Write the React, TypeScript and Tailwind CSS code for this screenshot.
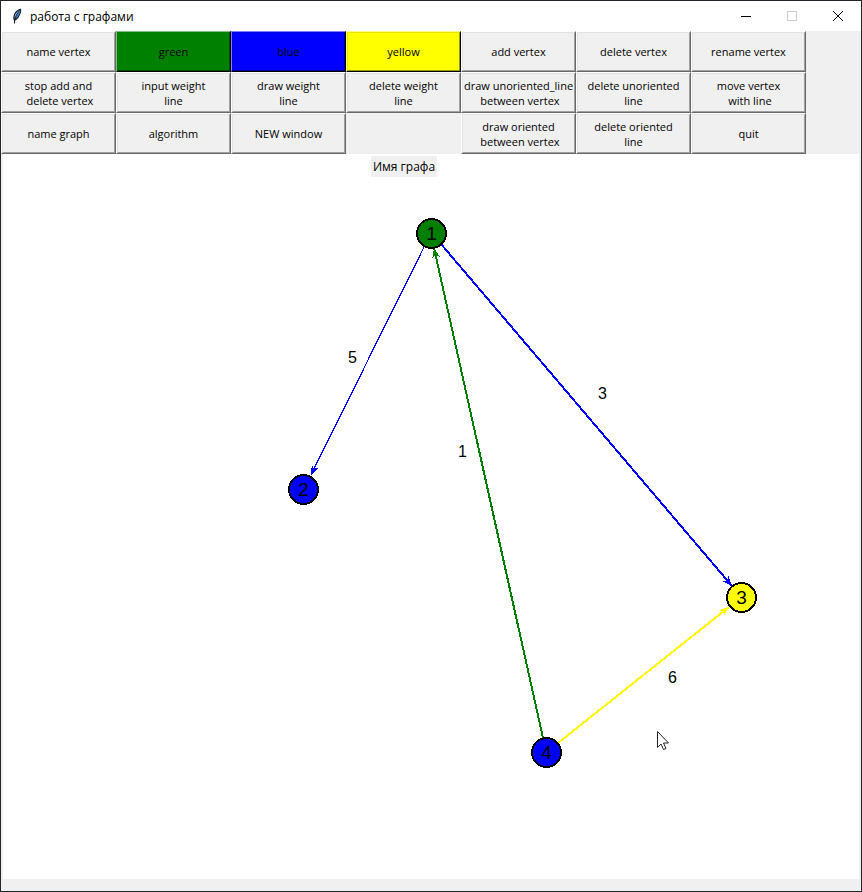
import type { ReactNode } from "react";

type ToolButton = { label: string; tone?: "green" | "blue" | "yellow" };

const tools: (ToolButton | null)[] = [
  { label: "name vertex" },
  { label: "green", tone: "green" },
  { label: "blue", tone: "blue" },
  { label: "yellow", tone: "yellow" },
  { label: "add vertex" },
  { label: "delete vertex" },
  { label: "rename vertex" },
  { label: "stop add and\n delete vertex" },
  { label: "input weight\nline" },
  { label: "draw weight\nline" },
  { label: "delete weight\nline" },
  { label: "draw unoriented_line\n between vertex" },
  { label: "delete unoriented\nline" },
  { label: "move vertex\n with line" },
  { label: "name graph" },
  { label: "algorithm" },
  { label: "NEW window" },
  null,
  { label: "draw oriented\n between vertex" },
  { label: "delete oriented\nline" },
  { label: "quit" },
];

const outer = {
  plain: "border-t-white border-l-white border-r-[#696969] border-b-[#696969]",
  green: "border-t-[#7fbf7f] border-l-[#7fbf7f] border-r-black border-b-black",
  blue: "border-t-[#7f7fff] border-l-[#7f7fff] border-r-black border-b-black",
  yellow: "border-t-[#ffff7f] border-l-[#ffff7f] border-r-black border-b-black",
};

const inner = {
  plain: "bg-[#f0f0f0] border-t-[#e3e3e3] border-l-[#e3e3e3] border-r-[#a0a0a0] border-b-[#a0a0a0]",
  green: "bg-[#008000] border-t-[#008000] border-l-[#008000] border-r-[#004d00] border-b-[#004d00]",
  blue: "bg-[#0000ff] border-t-[#0000e6] border-l-[#0000e6] border-r-[#000099] border-b-[#000099]",
  yellow: "bg-[#ffff00] border-t-[#e6e600] border-l-[#e6e600] border-r-[#999900] border-b-[#999900]",
};

function Tool({ label, tone }: ToolButton) {
  const key = tone ?? "plain";
  return (
    <button type="button" className={`flex h-[41px] border ${outer[key]}`}>
      <span className={`flex h-full w-full items-center justify-center border whitespace-pre text-center ${inner[key]}`}>
        {label}
      </span>
    </button>
  );
}

function WindowButton({ name, children }: { name: string; children: ReactNode }) {
  return (
    <button type="button" aria-label={name} className="flex h-full w-[46px] items-center justify-center">
      <svg width="12" height="12" viewBox="0 0 12 12" fill="none" shapeRendering="crispEdges">
        {children}
      </svg>
    </button>
  );
}

function Feather() {
  return (
    <svg width="16" height="16" viewBox="0 0 16 16" aria-hidden="true">
      <path d="M5 15.500 5 12.500C3.500 10 4.500 6 7 3.200 8.800 1.200 11.500.2 12 .8c.8 1.200-.2 5.700-2.200 8.400C8.500 11 7 12.300 6.200 12.500L6 15.500z" fill="#18222e" />
      <path d="M5.600 10.500C5 8 6.500 5 10.500 1.800 7.500 5.500 6.500 8 5.600 10.500z" fill="#9cc3ec" />
      <path d="M6.500 11C7 8 8.500 5 11.400 1.800 11.200 5.500 9.500 9 6.500 11z" fill="#3f76b8" />
    </svg>
  );
}

const edges = [
  { x1: 424, y1: 247, x2: 311, y2: 475, color: "#0000ff", width: 1.3, weight: "5", tx: 352.5, ty: 357 },
  { x1: 441, y1: 244, x2: 732, y2: 586, color: "#0000ff", width: 2, weight: "3", tx: 602.5, ty: 393 },
  { x1: 543, y1: 738, x2: 434, y2: 248, color: "#008000", width: 2, weight: "1", tx: 462.5, ty: 451 },
  { x1: 558, y1: 743, x2: 729, y2: 607, color: "#ffff00", width: 2, weight: "6", tx: 672.5, ty: 677 },
];

const vertices = [
  { x: 431, y: 233, name: "1", color: "#008000" },
  { x: 303, y: 489, name: "2", color: "#0000ff" },
  { x: 741, y: 597, name: "3", color: "#ffff00" },
  { x: 546, y: 752, name: "4", color: "#0000ff" },
];

function arrow(x1: number, y1: number, x2: number, y2: number) {
  const length = Math.hypot(x2 - x1, y2 - y1);
  const ux = (x2 - x1) / length;
  const uy = (y2 - y1) / length;
  const at = (back: number, side: number) => `${x2 - ux * back - uy * side},${y2 - uy * back + ux * side}`;
  return [at(0, 0), at(10, 4), at(7, 0), at(10, -4)].join(" ");
}

function Graph() {
  return (
    <svg className="block" width="856" height="725" viewBox="3 154 856 725" role="img" aria-label="graph">
      {edges.map((e) => (
        <g key={e.weight} shapeRendering="crispEdges">
          <line x1={e.x1} y1={e.y1} x2={e.x2} y2={e.y2} stroke={e.color} strokeWidth={e.width} />
          <polygon points={arrow(e.x1, e.y1, e.x2, e.y2)} fill={e.color} />
          <text x={e.tx} y={e.ty + 6} textAnchor="middle" className="font-['Liberation_Sans',Arial,sans-serif] text-[16px]">
            {e.weight}
          </text>
        </g>
      ))}
      {vertices.map((v) => (
        <g key={v.name}>
          <circle cx={v.x + 0.5} cy={v.y + 0.5} r="14.500" fill={v.color} stroke="#000" strokeWidth="2" shapeRendering="crispEdges" />
          <text x={v.x + 0.5} y={v.y + 7} textAnchor="middle" className="font-['Liberation_Sans',Arial,sans-serif] text-[19px]">
            {v.name}
          </text>
        </g>
      ))}
      <path d="M657.500 731.500v16l3.500-3.500 2.500 5.500 2.500-1-2.500-5.500h5z" fill="#fff" stroke="#222" strokeWidth="1" />
    </svg>
  );
}

export default function App() {
  return (
    <div className="flex min-h-screen flex-col border border-[#24252b] bg-[#f0f0f0] font-['Open_Sans','Noto_Sans',sans-serif] text-[12px] leading-[15px] text-black">
      <header className="flex h-[30px] items-center bg-white pl-2">
        <Feather />
        <h1 className="ml-[5px] flex-1">работа с графами</h1>
        <WindowButton name="Minimize">
          <path d="M1 6.500h10" stroke="#000" />
        </WindowButton>
        <WindowButton name="Maximize">
          <path d="M1.500 1.500h9v9h-9z" stroke="#ccc" />
        </WindowButton>
        <WindowButton name="Close">
          <path d="M1 1l10 10M11 1L1 11" stroke="#000" shapeRendering="auto" />
        </WindowButton>
      </header>
      <nav className="grid grid-cols-[repeat(7,115px)] text-[11px] leading-[15px]">
        {tools.map((tool, i) => (tool ? <Tool key={tool.label} {...tool} /> : <span key={i} />))}
      </nav>
      <main className="mx-0.5 grow bg-white">
        <div className="grid">
          <div className="col-start-1 row-start-1">
            <Graph />
          </div>
          <p className="col-start-1 row-start-1 ml-[368px] mt-[2px] h-[21px] w-[66px] bg-[#f0f0f0] pt-[3px] text-center">Имя графа</p>
        </div>
      </main>
      <footer className="h-3" />
    </div>
  );
}
